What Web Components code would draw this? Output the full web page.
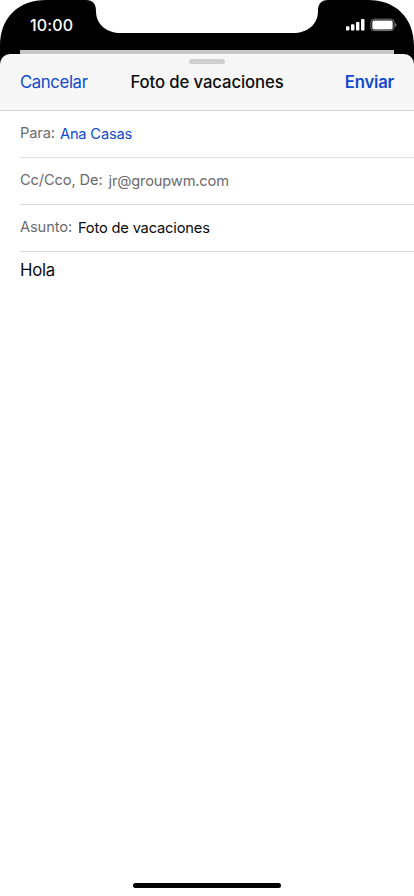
<!DOCTYPE html>
<html lang="es">
<head>
<meta charset="utf-8">
<title>Foto de vacaciones</title>
<style>
html,body{margin:0;height:100%;background:#fff}
body{font-family:Inter,"Liberation Sans",sans-serif;overflow:hidden}
</style>
</head>
<body>
<mail-screen></mail-screen>
<script>
const define = (name, html) => customElements.define(name, class extends HTMLElement {
  constructor() {
    super();
    const t = document.createElement('template');
    t.innerHTML = html;
    this.attachShadow({ mode: 'open' }).append(t.content.cloneNode(true));
  }
});

define('status-bar', `
<style>
:host{display:grid;height:54px;width:414px}
svg,.bar{grid-area:1/1}
svg.bg{display:block}
.bar{display:flex;justify-content:space-between;align-items:flex-start;padding:15px 17px 0 30px;color:#fff}
.time{font-size:16px;line-height:20px;font-weight:550;letter-spacing:.15px}
.icons{display:block;margin-top:3px}
</style>
<svg class="bg" width="414" height="70" viewBox="0 0 414 70">
  <path d="M0 70V46C0 17 19 0 46 0H86C93 0 96 4 96 11C96 25 107 33 121 33H293C307 33 318 25 318 11C318 4 321 0 328 0H368C395 0 414 17 414 46V70Z"/>
  <path d="M20 50H394V56H20Z" fill="#c6c6c6"/>
</svg>
<div class="bar">
  <span class="time">10:00</span>
  <svg class="icons" width="51" height="14" viewBox="0 0 51 14" fill="#fff">
    <rect x="0" y="8.2" width="3.4" height="4.3" rx=".7"/>
    <rect x="5" y="6.2" width="3.4" height="6.3" rx=".7"/>
    <rect x="10" y="4" width="3.4" height="8.5" rx=".7"/>
    <rect x="15" y="1" width="3.5" height="11.5" rx=".7"/>
    <rect x="24.9" y="1.2" width="23.2" height="11.4" rx="3" fill="none" stroke="#777" stroke-width="1"/>
    <rect x="26.3" y="2.4" width="20.4" height="9" rx="1.6"/>
    <path d="M49 5Q50.6 5.5 50.6 6.9T49 8.8Z" fill="#777"/>
  </svg>
</div>`);

define('sheet-header', `
<style>
:host{display:flex;flex-direction:column;align-items:center;box-sizing:border-box;height:57px;padding-top:5px;background:#f7f7f7;border-bottom:1px solid #d5d5d5;border-radius:10px 10px 0 0}
.grip{width:36px;height:5px;border-radius:3px;background:#cfcfcf}
.row{align-self:stretch;display:grid;grid-template-columns:1fr auto 1fr;padding:8px 20px 0;font-size:16.7px;line-height:20px}
</style>
<div class="grip"></div>
<div class="row"><slot name="start"></slot><slot></slot><slot name="end"></slot></div>`);

define('mail-field', `
<style>
:host{display:flex;gap:var(--gap,6px);box-sizing:border-box;height:47px;margin-left:20px;border-bottom:1px solid #dedede;padding-top:12px;font-size:14.7px;line-height:20px;color:#6b6b6e;white-space:pre}
.label{letter-spacing:-.14px}
.value{letter-spacing:-.19px;margin-top:1px}
</style><span class="label"><slot name="label"></slot></span><span class="value"><slot></slot></span>`);

define('home-indicator', `
<style>
:host{display:flex;justify-content:center;height:13px}
div{width:148px;height:5px;border-radius:3px;background:#000}
</style><div></div>`);

define('mail-screen', `
<style>
:host{display:flex;flex-direction:column;width:414px;height:896px;background:#fff}
status-bar,sheet-header,mail-field,home-indicator{flex:none}
sheet-header{position:relative}
.blue{color:#0f4aca}
.cancel{letter-spacing:-.35px}
.title{font-weight:550;letter-spacing:-.1px;color:#0b0b0d}
.end{justify-self:end;font-weight:600;letter-spacing:-.2px}
.to{--gap:5px}
main{flex:1;padding:7px 20px;font-size:16.8px;line-height:22px;letter-spacing:-.3px;color:#0b0b0d}
.dark{color:#0b0b0d}
</style>
<status-bar></status-bar>
<sheet-header>
  <span slot="start" class="blue cancel">Cancelar</span>
  <span class="title">Foto de vacaciones</span>
  <span slot="end" class="blue end">Enviar</span>
</sheet-header>
<mail-field class="to"><span slot="label">Para:</span><span class="blue">Ana Casas</span></mail-field>
<mail-field><span slot="label">Cc/Cco, De:</span><span>jr@groupwm.com</span></mail-field>
<mail-field><span slot="label">Asunto:</span><span class="dark">Foto de vacaciones</span></mail-field>
<main>Hola</main>
<home-indicator></home-indicator>`);
</script>
</body>
</html>
